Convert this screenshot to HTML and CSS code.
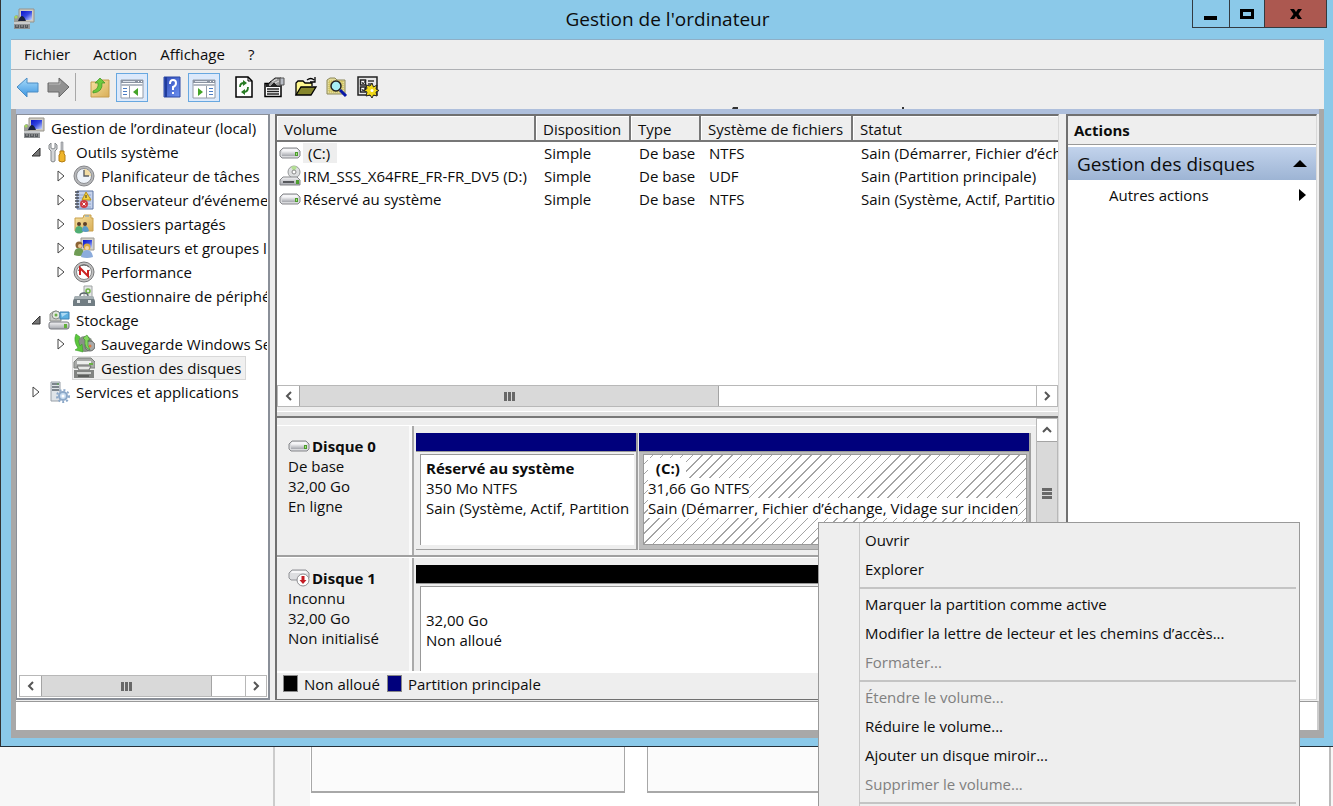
FILE: index.html
```html
<!DOCTYPE html>
<html lang="fr">
<head>
<meta charset="utf-8">
<meta name="viewport" content="width=device-width, initial-scale=1">
<title>Gestion de l'ordinateur</title>
<link rel="stylesheet" href="styles.css">
</head>
<body>
<svg class="sprite" aria-hidden="true">
  <defs>
    <linearGradient id="screen" x1="0" y1="0" x2="1" y2="1"><stop offset="0" stop-color="#0a14c8"/><stop offset=".5" stop-color="#3446e0"/><stop offset="1" stop-color="#c8d8ff"/></linearGradient>
    <linearGradient id="metal" x1="0" y1="0" x2="0" y2="1"><stop offset="0" stop-color="#f4f4f6"/><stop offset="1" stop-color="#a4a6ac"/></linearGradient>
    <linearGradient id="folder" x1="0" y1="0" x2="1" y2="1"><stop offset="0" stop-color="#f7e4a4"/><stop offset="1" stop-color="#d9ae58"/></linearGradient>
    <linearGradient id="blueArrow" x1="0" y1="0" x2="0" y2="1"><stop offset="0" stop-color="#a8dcfa"/><stop offset="1" stop-color="#3c94e0"/></linearGradient>
    <linearGradient id="book" x1="0" y1="0" x2="1" y2="1"><stop offset="0" stop-color="#2c48b8"/><stop offset="1" stop-color="#6e92f0"/></linearGradient>
  </defs>
  <symbol id="i-computer" viewBox="0 0 22 22">
    <path d="M6 1h15v13H6z" fill="#d0cdc4" stroke="#96938a"/><path d="M8 3h11v9H8z" fill="url(#screen)"/>
    <path d="M1 9q3-4 5 0v5H1z" fill="#9a9c96"/><circle cx="3" cy="9" r="1.500" fill="#a4d85c"/>
    <path d="M5 13q2-5 4-5t4 5z" fill="#18203c"/><path d="M1 14h16v7H1z" fill="#8f9294"/><path d="M1 14h16v2H1z" fill="#c9cbcc"/>
    <path d="M2 17h4v3H2zm5 0h4v3H7zm5 0h3v3h-3z" fill="#55595d"/><path d="M3 18h2m3 0h2m3 0h1" stroke="#aaa"/>
  </symbol>
  <symbol id="i-tools" viewBox="0 0 22 22">
    <path d="M3 2v5l2 1 2-1V2l2 2v4l-2 2v10q-2 2-4 0V10L1 8V4z" fill="#d4d6d8" stroke="#85898c"/>
    <path d="M13 1h2v9h-2z" fill="#bcbec2" stroke="#85888c" stroke-width=".6"/><path d="M12 10h4v3l1 1v6q-3 2-6 0v-6l1-1z" fill="#efb52a" stroke="#b47c10"/>
  </symbol>
  <symbol id="i-clock" viewBox="0 0 22 22">
    <circle cx="11" cy="11" r="10" fill="#b7b8ba" stroke="#85868a"/><circle cx="11" cy="11" r="7.500" fill="#eef3fa" stroke="#8c8e92"/>
    <path d="M11 11V4a7 7 0 0 1 7 7z" fill="#f2dca4"/><path d="M11 5v6h5" fill="none" stroke="#5c6066" stroke-width="1.400"/>
  </symbol>
  <symbol id="i-log" viewBox="0 0 22 22">
    <path d="M4 2h16v18H4z" fill="#c7d4ec" stroke="#5c74a4"/><path d="M6 6h12M6 9h12M6 12h12M6 15h12M6 18h12" stroke="#8fa4cc"/>
    <path d="M2 3h4M2 6h4M2 9h4M2 12h4M2 15h4M2 18h4" stroke="#484c54" stroke-width="1.400"/>
    <path d="M13 3l5 8H9z" fill="#f4d23c" stroke="#b89018"/><path d="M13 6v3" stroke="#333"/><circle cx="11" cy="15" r="4" fill="#cf3c44"/><path d="M9.500 13.500l3 3m0-3l-3 3" stroke="#fff"/>
  </symbol>
  <symbol id="i-shared" viewBox="0 0 22 22">
    <path d="M2 5h8l1-3h7v3h2v13H2z" fill="url(#folder)" stroke="#c9a04c"/><path d="M12 3h4" stroke="#74a4d8"/>
    <circle cx="6" cy="11" r="2" fill="#5c4028"/><circle cx="12" cy="11" r="2" fill="#5c4028"/><path d="M2 19q0-6 4-6t4 6q-4 3-8 0z" fill="#4fae74"/><path d="M9 18q0-5 3-5t4 5q-3 2-7 0z" fill="#5a9cc8"/>
  </symbol>
  <symbol id="i-users" viewBox="0 0 22 22">
    <path d="M8 1h13v12H8z" fill="#d3d1ca" stroke="#9c9a92"/><path d="M10 3h9v8h-9z" fill="url(#screen)"/>
    <circle cx="6" cy="8" r="3.500" fill="#8c6434"/><circle cx="7" cy="9" r="2" fill="#efc898"/><path d="M1 18q0-7 5-7t5 7q-5 2-10 0z" fill="#6f9c54"/>
    <circle cx="14" cy="10" r="3.500" fill="#d9ac44"/><circle cx="14" cy="11" r="2" fill="#f4d4a8"/><path d="M8 20q1-7 6-7t6 7q-6 2-12 0z" fill="#8cacdc"/>
  </symbol>
  <symbol id="i-gauge" viewBox="0 0 22 22">
    <circle cx="11" cy="11" r="10" fill="#c2c2c2" stroke="#77787a"/><circle cx="11" cy="11" r="7.500" fill="#fff" stroke="#88898a"/>
    <path d="M6 6q5-4 10 0M5 9l2 1m10-1l-2 1" fill="none" stroke="#5a5a5a"/><path d="M7 14V7l8 8V9" fill="none" stroke="#cc2222" stroke-width="2"/>
  </symbol>
  <symbol id="i-device" viewBox="0 0 22 22">
    <path d="M11 1h8v13h-8z" fill="#e4e6e6" stroke="#a0a4a4"/><circle cx="15" cy="6" r="2" fill="none" stroke="#6cb444" stroke-width="1.500"/>
    <path d="M7 11q0-3 4-3t4 3" fill="none" stroke="#5c666c" stroke-width="1.400"/><path d="M2 11h18l2 5v5H0v-5z" fill="#717d83"/><path d="M2 11h18l1 3H1z" fill="#a6b0b4"/><path d="M4 15h3v3H4zm11 0h3v3h-3z" fill="#e2e6e8"/>
  </symbol>
  <symbol id="i-storage" viewBox="0 0 22 22">
    <path d="M2 5q6-6 11 0v7H2z" fill="#c9cac8" stroke="#92958f"/><circle cx="8" cy="6" r="4" fill="#e2e6de" stroke="#8a8d88"/><circle cx="8" cy="6" r="1.500" fill="#6cb048"/>
    <path d="M12 3h9v7h-9z" fill="#5cb0e0" stroke="#3c82b4"/><path d="M13 4h7l-6 4z" fill="#acdaf4"/><rect x="1" y="13" width="20" height="7" rx="2" fill="url(#metal)" stroke="#787a80"/><path d="M16 15h3v4h-3z" fill="#62b03c"/>
  </symbol>
  <symbol id="i-backup" viewBox="0 0 22 22">
    <circle cx="12" cy="11" r="8" fill="#8a9088"/><circle cx="17" cy="13" r="5" fill="#a8aaaa" stroke="#646866"/><circle cx="17" cy="13" r="1.500" fill="#e07840"/>
    <path d="M3 1q-3 7 2 14l-3 2 8 2-1-8-2 2q-3-5 0-9z" fill="#5cc83c" stroke="#3c9c2c" stroke-width=".6"/><path d="M10 5l4-3 3 5-2 0q-1 6 2 10-6-2-5-10z" fill="#82d85c" stroke="#3c8c2c" stroke-width=".6"/>
  </symbol>
  <symbol id="i-disks" viewBox="0 0 22 22">
    <path d="M5 1h13l4 4v6H1V5z" fill="#a8aaa8" stroke="#7c807c"/><path d="M4 4h14v3H4z" fill="#eceeec"/><path d="M16 6h4v2h-4z" fill="#68b044"/>
    <path d="M4 9h14l-2 4H6z" fill="#e6e8e6" stroke="#6a6c6a"/><path d="M1 13h20v8H1z" fill="#828482"/><path d="M4 15h14v2H4z" fill="#d2d4d2"/><path d="M5 18h11v2H5z" fill="#5c5e5c"/>
  </symbol>
  <symbol id="i-services" viewBox="0 0 22 22">
    <path d="M3 1h9v19H3z" fill="#dfe4e8" stroke="#98a0a8"/><path d="M4 3h7M4 6h7M4 9h7" stroke="#5c666e" stroke-width="1.400"/><path d="M9 3h2" stroke="#58b048"/>
    <circle cx="15" cy="15" r="4" fill="#c8dcf0" stroke="#8ca8c8" stroke-width="2"/><circle cx="15" cy="15" r="6" fill="none" stroke="#8ca8c8" stroke-width="2" stroke-dasharray="2 2"/><circle cx="15" cy="15" r="1.500" fill="#fff"/>
  </symbol>
  <symbol id="i-drive" viewBox="0 0 22 12">
    <path d="M4 1h14l3 3v5l-2 2H3L1 9V4z" fill="#d9dadd" stroke="#85868a"/><path d="M3 4h16v5H3z" fill="url(#metal)"/><path d="M4 2h14l1 2H3z" fill="#f5f5f7"/><path d="M16 5h3v4h-3z" fill="#4c9c2c"/><path d="M17 6h1v2h-1z" fill="#a4e084"/>
  </symbol>
  <symbol id="i-optical" viewBox="0 0 22 22">
    <circle cx="15" cy="7" r="6" fill="#dddfe0" stroke="#96989a"/><path d="M15 7l-3-5q3-2 6 0z" fill="#b4e094"/><circle cx="15" cy="7" r="2" fill="#fff" stroke="#888"/>
    <path d="M4 12h14l3 3v5H1v-5z" fill="url(#metal)" stroke="#85878a"/><path d="M4 17h11" stroke="#56585c" stroke-width="2"/><path d="M17 15h3v4h-3z" fill="#4ea030"/>
  </symbol>
  <symbol id="i-drive-error" viewBox="0 0 22 18">
    <path d="M4 1h14l3 3v5l-2 2H3L1 9V4z" fill="#dddee1" stroke="#909196"/><path d="M4 2h14l1 2H3z" fill="#f7f7f9"/><circle cx="15" cy="11" r="6" fill="#fff" stroke="#8c8c90"/><path d="M15 7v5" stroke="#c41c24" stroke-width="3"/><path d="M11.500 11h7L15 15z" fill="#c41c24"/>
  </symbol>
  <symbol id="i-open" viewBox="0 0 10 10"><path d="M9 1v8H1z" fill="#777" stroke="#333"/></symbol>
  <symbol id="i-closed" viewBox="0 0 8 12"><path d="M1 1v10l6-5z" fill="#fff" stroke="#444"/></symbol>
  <symbol id="i-left" viewBox="0 0 8 12"><path d="M6 2L2 6l4 4" fill="none" stroke="#555" stroke-width="2"/></symbol>
  <symbol id="i-right" viewBox="0 0 8 12"><path d="M2 2l4 4-4 4" fill="none" stroke="#555" stroke-width="2"/></symbol>
  <symbol id="i-up" viewBox="0 0 12 8"><path d="M2 6l4-4 4 4" fill="none" stroke="#555" stroke-width="2"/></symbol>
  <symbol id="i-down" viewBox="0 0 12 8"><path d="M2 2l4 4 4-4" fill="none" stroke="#555" stroke-width="2"/></symbol>
</svg>

<main class="window">
  <header class="titlebar">
    <svg class="app-icon"><use href="#i-computer"/></svg>
    <h1 class="title">Gestion de l'ordinateur</h1>
    <div class="caption-buttons">
      <button class="caption minimize" aria-label="Réduire"><svg width="14" height="14"><path d="M0 9h13v4H0z"/></svg></button>
      <button class="caption maximize" aria-label="Agrandir"><svg width="14" height="14"><path d="M1.500 3.500h11v7h-11z" fill="none" stroke="#000" stroke-width="3"/></svg></button>
      <button class="caption close" aria-label="Fermer"><svg width="14" height="14"><path d="M1 2h4l2 3 2-3h4L9.500 7l3.500 5H9L7 9l-2 3H1l3.500-5z"/></svg></button>
    </div>
  </header>

  <nav class="menubar">
    <button>Fichier</button><button>Action</button><button>Affichage</button><button>?</button>
  </nav>

  <div class="toolbar">
    <div class="tools history">
      <button aria-label="Précédent"><svg width="24" height="24"><path d="M1 12L11 3v5h11v9H11v5z" fill="url(#blueArrow)" stroke="#4a8cc4"/></svg></button>
      <button aria-label="Suivant"><svg width="24" height="24"><path d="M23 12L13 3v5H2v9h11v5z" fill="#929292" stroke="#686868"/><path d="M3 9h11V6" stroke="#bbb" fill="none"/></svg></button>
    </div>
    <div class="tools nav-tools">
      <button aria-label="Dossier parent"><svg width="24" height="24"><path d="M3 7h9l2-2h7v17H3z" fill="url(#folder)" stroke="#c49c4c"/><path d="M5 16q6-2 5-8H7l5-5 5 5h-3q1 9-9 10z" fill="#6cc83c" stroke="#3c9424" stroke-width=".7"/></svg></button>
      <button class="pressed" aria-label="Arborescence"><svg width="24" height="24"><path d="M1 5h22v18H1z" fill="#fff" stroke="#949ca8"/><path d="M1 5h22v3H1z" fill="#8c94a2"/><path d="M3 6.500h12" stroke="#dde2ea"/><path d="M18 6.500h1m2 0h1" stroke="#fff"/><path d="M1 9h22v2H1z" fill="#b4bac4"/><path d="M9.500 11v12" stroke="#949ca8"/><path d="M3 13.500h4M3 16.500h4M3 19.500h4" stroke="#4c7cc4"/><path d="M18 13v8l-5-4z" fill="#44a428"/></svg></button>
    </div>
    <div class="tools nav-tools">
      <button aria-label="Aide"><svg width="24" height="24"><path d="M4 2h16v20H4z" fill="url(#book)" stroke="#2c48a4"/><path d="M6 2v20" stroke="#203c9c" stroke-width="2"/><path d="M10 9q0-4 3-4t3 3-3 4v3" fill="none" stroke="#fff" stroke-width="2"/><path d="M12 17h2v2h-2z" fill="#fff"/></svg></button>
      <button class="pressed" aria-label="Volet Actions"><svg width="24" height="24"><path d="M1 5h22v18H1z" fill="#fff" stroke="#949ca8"/><path d="M1 5h22v3H1z" fill="#8c94a2"/><path d="M3 6.500h12" stroke="#dde2ea"/><path d="M18 6.500h1m2 0h1" stroke="#fff"/><path d="M1 9h22v2H1z" fill="#b4bac4"/><path d="M14.500 11v12" stroke="#949ca8"/><path d="M17 13.500h4M17 16.500h4M17 19.500h4" stroke="#4c7cc4"/><path d="M6 13v8l5-4z" fill="#44a428"/></svg></button>
    </div>
    <div class="tools disk-tools">
      <button aria-label="Actualiser"><svg width="24" height="24"><path d="M4 2h12l4 4v16H4z" fill="#fff" stroke="#000" stroke-width="1.500"/><path d="M16 2v4h4" fill="none" stroke="#000"/><path d="M8 12q0-4 4-4M16 12q0 5-4 5" fill="none" stroke="#287c24" stroke-width="1.800"/><path d="M11 5v6l4-3zM13 14v6l-4-3z" fill="#287c24"/></svg></button>
      <button aria-label="Propriétés"><svg width="24" height="24"><path d="M2 8.500h16v13H2z" fill="#fff" stroke="#000" stroke-width="1.500"/><path d="M3 9h14v3H3z" fill="#222"/><path d="M4 14h12M4 16.500h12M4 19h12" stroke="#222" stroke-width="1.400"/><path d="M6 8l6-5h6v8h-4l-3-3-4 4-2-2 3-4z" fill="#999" stroke="#222"/><path d="M17 3h4v7h-4z" fill="#b8bcc4" stroke="#555"/><path d="M9 7l5-3m-2 4l4-2" stroke="#ddd"/></svg></button>
      <button aria-label="Ouvrir"><svg width="24" height="24"><path d="M2 20V8l2-2h5l2 2h7v3" fill="#fff890" stroke="#000" stroke-width="1.300"/><path d="M2 20l5-8h15l-5 8z" fill="#86862c" stroke="#000" stroke-width="1.300"/><path d="M13 5q4-3 7 0m1-3v5h-5" fill="none" stroke="#000" stroke-width="1.300"/></svg></button>
      <button aria-label="Explorer"><svg width="24" height="24"><path d="M2 5l3-2h5l2 2h8v14H2z" fill="#e4dc9c" stroke="#8c8858"/><path d="M4 6h14v11H4z" fill="#ddd278" stroke="#c4b44c" stroke-dasharray="1 1"/><circle cx="11" cy="11" r="5" fill="#a8f0f4" stroke="#222" stroke-width="1.500"/><path d="M15 15l6 6" stroke="#0818a8" stroke-width="3"/></svg></button>
      <button aria-label="Paramètres"><svg width="24" height="24"><path d="M2 2h19v18H2z" fill="#e8e8e8" stroke="#222" stroke-width="1.500"/><path d="M4.500 5h5v5h-5zm0 7h5v5h-5z" fill="#fff" stroke="#222" stroke-width="1.500"/><path d="M6 7l1 2 3-4M6 14l1 2 3-4" fill="none" stroke="#222"/><path d="M12 6h6M12 9h4" stroke="#333" stroke-width="1.500"/><path d="M16 8l1.500 4 3.500-2-1 4 3 1.500-3 1.500 1 4-3.500-1L16 23l-2-3-4 1 1-4-3-1.500 3-2-1-3.500 4 1z" fill="#f0d818" stroke="#222"/><circle cx="16" cy="15.500" r="1.500" fill="#fff"/></svg></button>
    </div>
    <svg class="clipped-caption" width="176" height="2" aria-hidden="true"><path d="M1 0h5v2H0zM170 0h2v2h-2z" fill="#333"/></svg>
  </div>

  <section class="workspace">
    <div class="panes">
      <aside class="tree-pane">
        <ul class="tree">
          <li class="node root"><svg class="icon"><use href="#i-computer"/></svg><span>Gestion de l’ordinateur (local)</span></li>
          <li class="node"><button class="toggle" aria-label="Fermer"><svg class="opened"><use href="#i-open"/></svg></button><svg class="icon"><use href="#i-tools"/></svg><span>Outils système</span></li>
          <li class="node child"><button class="toggle" aria-label="Développer"><svg class="closed"><use href="#i-closed"/></svg></button><svg class="icon"><use href="#i-clock"/></svg><span>Planificateur de tâches</span></li>
          <li class="node child"><button class="toggle" aria-label="Développer"><svg class="closed"><use href="#i-closed"/></svg></button><svg class="icon"><use href="#i-log"/></svg><span>Observateur d’événeme</span></li>
          <li class="node child"><button class="toggle" aria-label="Développer"><svg class="closed"><use href="#i-closed"/></svg></button><svg class="icon"><use href="#i-shared"/></svg><span>Dossiers partagés</span></li>
          <li class="node child"><button class="toggle" aria-label="Développer"><svg class="closed"><use href="#i-closed"/></svg></button><svg class="icon"><use href="#i-users"/></svg><span>Utilisateurs et groupes l</span></li>
          <li class="node child"><button class="toggle" aria-label="Développer"><svg class="closed"><use href="#i-closed"/></svg></button><svg class="icon"><use href="#i-gauge"/></svg><span>Performance</span></li>
          <li class="node child leaf"><svg class="icon"><use href="#i-device"/></svg><span>Gestionnaire de périphé</span></li>
          <li class="node"><button class="toggle" aria-label="Fermer"><svg class="opened"><use href="#i-open"/></svg></button><svg class="icon"><use href="#i-storage"/></svg><span>Stockage</span></li>
          <li class="node child"><button class="toggle" aria-label="Développer"><svg class="closed"><use href="#i-closed"/></svg></button><svg class="icon"><use href="#i-backup"/></svg><span>Sauvegarde Windows Se</span></li>
          <li class="node child leaf"><div class="selected"><svg class="icon"><use href="#i-disks"/></svg><span>Gestion des disques</span></div></li>
          <li class="node"><button class="toggle" aria-label="Développer"><svg class="closed"><use href="#i-closed"/></svg></button><svg class="icon"><use href="#i-services"/></svg><span>Services et applications</span></li>
        </ul>
        <div class="scroll-h">
          <button aria-label="Gauche"><svg class="closed"><use href="#i-left"/></svg></button>
          <div class="track"><div class="thumb tree-thumb"><i></i><i></i><i></i></div></div>
          <button aria-label="Droite"><svg class="closed"><use href="#i-right"/></svg></button>
        </div>
      </aside>

      <section class="center-pane">
        <div class="volumes">
          <table class="volume-table">
            <colgroup><col class="c-volume"><col class="c-layout"><col class="c-type"><col class="c-fs"><col></colgroup>
            <thead><tr><th>Volume</th><th>Disposition</th><th>Type</th><th>Système de fichiers</th><th>Statut</th></tr></thead>
            <tbody>
              <tr><td><div class="volume"><svg class="drive"><use href="#i-drive"/></svg><span class="picked">(C:)</span></div></td><td>Simple</td><td>De base</td><td>NTFS</td><td>Sain (Démarrer, Fichier d’éch</td></tr>
              <tr><td><div class="volume"><svg class="icon"><use href="#i-optical"/></svg><span>IRM_SSS_X64FRE_FR-FR_DV5 (D:)</span></div></td><td>Simple</td><td>De base</td><td>UDF</td><td>Sain (Partition principale)</td></tr>
              <tr><td><div class="volume"><svg class="drive"><use href="#i-drive"/></svg><span>Réservé au système</span></div></td><td>Simple</td><td>De base</td><td>NTFS</td><td>Sain (Système, Actif, Partitio</td></tr>
            </tbody>
          </table>
        </div>
        <div class="scroll-h">
          <button aria-label="Gauche"><svg class="closed"><use href="#i-left"/></svg></button>
          <div class="track"><div class="thumb list-thumb"><i></i><i></i><i></i></div></div>
          <button aria-label="Droite"><svg class="closed"><use href="#i-right"/></svg></button>
        </div>
        <div class="split-h"></div>
        <div class="graph">
          <div class="disks">
            <div class="disk">
              <div class="disk-label"><strong><svg class="drive"><use href="#i-drive"/></svg>Disque 0</strong><span>De base</span><span>32,00 Go</span><span>En ligne</span></div>
              <div class="partitions">
                <div class="partition reserved"><div class="band"></div><div class="part-body"><strong>Réservé au système</strong><span>350 Mo NTFS</span><span>Sain (Système, Actif, Partition</span></div></div>
                <div class="partition current"><div class="band"></div><div class="part-body"><strong>&nbsp; (C:)</strong><span>31,66 Go NTFS</span><span>Sain (Démarrer, Fichier d’échange, Vidage sur inciden</span></div></div>
              </div>
            </div>
            <div class="disk">
              <div class="disk-label"><strong><svg class="drive-error"><use href="#i-drive-error"/></svg>Disque 1</strong><span>Inconnu</span><span>32,00 Go</span><span>Non initialisé</span></div>
              <div class="partitions">
                <div class="partition unallocated"><div class="band"></div><div class="part-body"><strong>&nbsp;</strong><span>32,00 Go</span><span>Non alloué</span></div></div>
              </div>
            </div>
          </div>
          <div class="scroll-v">
            <button aria-label="Haut"><svg class="updown"><use href="#i-up"/></svg></button>
            <div class="v-track"><div class="v-thumb"><i></i><i></i><i></i></div></div>
            <button aria-label="Bas"><svg class="updown"><use href="#i-down"/></svg></button>
          </div>
        </div>
        <div class="legend"><span><i class="swatch black"></i>Non alloué</span><span><i class="swatch navy"></i>Partition principale</span></div>
      </section>

      <aside class="actions-pane">
        <h2>Actions</h2>
        <button class="group">Gestion des disques<svg width="14" height="8"><path d="M0 7L7 0l7 7z"/></svg></button>
        <button class="action">Autres actions<svg width="8" height="12"><path d="M1 0l7 6-7 6z"/></svg></button>
      </aside>
    </div>
    <div class="statusbar"></div>
  </section>
</main>

<div class="backdrop">
  <div class="back-left"></div>
  <div class="back-sheet"><div class="back-box"></div><div class="back-box"></div></div>
  <div class="back-right"></div>
</div>

<div class="context-menu" role="menu">
  <button role="menuitem">Ouvrir</button>
  <button role="menuitem">Explorer</button>
  <hr>
  <button role="menuitem">Marquer la partition comme active</button>
  <button role="menuitem">Modifier la lettre de lecteur et les chemins d’accès...</button>
  <button role="menuitem" disabled>Formater...</button>
  <hr>
  <button role="menuitem" disabled>Étendre le volume...</button>
  <button role="menuitem">Réduire le volume...</button>
  <button role="menuitem">Ajouter un disque miroir...</button>
  <button role="menuitem" disabled>Supprimer le volume...</button>
  <hr>
</div>
</body>
</html>
```

FILE: styles.css
```css
* { box-sizing: border-box; }

body {
  margin: 0;
  height: 100vh;
  display: grid;
  grid-template-rows: minmax(0, 1fr) 59px;
  overflow: hidden;
  position: relative;
  background: #fff;
  color: #0c0c0c;
  font: 15px/20px "Open Sans", "Noto Sans", sans-serif;
}

button {
  margin: 0;
  padding: 0;
  border: 0;
  background: none;
  color: inherit;
  font: inherit;
}

svg { display: block; flex: none; }
ul { list-style: none; margin: 0; padding: 0; }
.sprite { position: absolute; width: 0; height: 0; }

/* Window frame */
.window {
  display: flex;
  flex-direction: column;
  min-height: 0;
  padding: 0 9px 8px 10px;
  background: #8bc9e9;
  border-left: 1px solid #333;
  border-bottom: 1px solid #24303a;
}

.titlebar {
  display: grid;
  grid-template-columns: 135px 1fr 135px;
  height: 40px;
  border-bottom: 1px solid #8fafc6;
}
.app-icon { width: 22px; height: 22px; margin: 8px 0 0 2px; }
.title { margin: 0; font-size: 19px; font-weight: 400; line-height: 39px; text-align: center; }
.caption-buttons {
  display: flex;
  justify-self: end;
  align-self: start;
  height: 28px;
  margin-right: -3px;
  border: 1px solid #333a40;
  border-top: 0;
}
.caption { display: grid; place-items: center; width: 37px; border-right: 1px solid #333a40; }
.caption.maximize { width: 35px; }
.caption.close { width: 61px; border-right: 0; background: #ac5850; }

.menubar {
  display: flex;
  gap: 23px;
  height: 30px;
  padding: 0 13px 2px;
  background: #eee;
  border-bottom: 1px solid #aeb0b4;
}

.toolbar {
  display: flex;
  align-items: center;
  gap: 12px;
  height: 39px;
  padding: 0 5px;
  background: #eee;
}
.tools { display: flex; align-items: center; margin-bottom: 5px; }
.history { gap: 6px; height: 28px; padding-right: 5px; border-right: 1px solid #a8a8a8; }
.nav-tools { gap: 4px; }
.disk-tools { gap: 7px; }
.pressed { height: 29px; padding: 1px 3px; background: #dce9fb; border: 1px solid #68a8e0; }
.clipped-caption { align-self: flex-end; margin-left: 340px; }

/* Workspace */
.workspace {
  flex: 1;
  min-height: 0;
  display: flex;
  flex-direction: column;
  border: solid #a8a8a8;
  border-width: 0 5px 8px;
  background: #eee;
}
.panes {
  flex: 1;
  min-height: 0;
  display: grid;
  grid-template-columns: 254px minmax(0, 1fr) 251px;
  column-gap: 5px;
  padding: 0 2px 1px 0;
  border-top: 5px solid #aebfdc;
}
.statusbar { height: 29px; background: #fff; border-top: 1px solid #999; border-right: 2px solid #ccc; }

.tree-pane {
  display: flex;
  flex-direction: column;
  justify-content: space-between;
  min-width: 0;
  min-height: 0;
  padding: 1px 1px 1px 2px;
  background: #fff;
  border: solid #8a8f98;
  border-width: 1px 2px 2px 1px;
}
.tree { overflow: hidden; }
.node { display: flex; align-items: center; height: 24px; padding-left: 4px; white-space: nowrap; }
.node span { padding-left: 6px; }
.node.child { padding-left: 29px; }
.node.leaf { padding-left: 54px; }
.icon { flex: none; width: 22px; height: 22px; }
.toggle { flex: none; display: grid; place-items: center; width: 25px; height: 24px; }
.opened { width: 10px; height: 10px; }
.closed { width: 8px; height: 12px; }
.selected { display: flex; align-items: center; height: 22px; padding-right: 4px; background: #f0f0f0; outline: 1px solid #d8d8d8; }

/* Scroll bars */
.scroll-h { display: flex; flex: none; height: 22px; background: #fff; border: 1px solid #b8b8b8; }
.scroll-h button { display: grid; place-items: center; width: 21px; }
.scroll-h button:last-child { border-left: 1px solid #b8b8b8; }
.track { flex: 1; }
.thumb {
  display: flex;
  align-items: center;
  justify-content: center;
  gap: 1px;
  height: 20px;
  background: #d9d9d9;
  border: solid #a4a4a4;
  border-width: 0 1px;
}
.thumb i { width: 3px; height: 9px; background: #686868; }
.tree-thumb { width: 84%; }
.list-thumb { width: 57%; }
.scroll-v { display: flex; flex-direction: column; width: 22px; background: #fff; border: 1px solid #b8b8b8; }
.scroll-v button { display: grid; place-items: center; height: 22px; }
.updown { width: 12px; height: 8px; }
.v-track { flex: 1; }
.v-thumb {
  display: flex;
  flex-direction: column;
  align-items: center;
  justify-content: center;
  gap: 1px;
  height: 105px;
  background: #d9d9d9;
  border: solid #a4a4a4;
  border-width: 1px 0;
}
.v-thumb i { width: 10px; height: 3px; background: #686868; }

/* Centre pane */
.center-pane {
  display: flex;
  flex-direction: column;
  min-width: 0;
  min-height: 0;
  margin-right: 2px;
  border: solid #707070;
  border-width: 2px 1px 1px 2px;
  border-right-color: #d8d8d8;
}
.volumes { flex: none; height: 269px; overflow: hidden; background: #fff; }
.volume-table { width: 100%; table-layout: fixed; border-collapse: separate; border-spacing: 0; white-space: nowrap; }
.c-volume { width: 259px; }
.c-layout { width: 95px; }
.c-type { width: 70px; }
.c-fs { width: 152px; }
.volume-table th {
  height: 26px;
  padding: 2px 0 0 7px;
  font-weight: 400;
  text-align: left;
  background: #eee;
  border: solid #777;
  border-width: 0 2px 2px 0;
  box-shadow: inset 1px 1px #fff;
}
.volume-table th:last-child { border-right: 0; }
.volume-table td { height: 23px; padding: 0 0 2px 8px; overflow: hidden; }
.volume-table td:first-child { padding-left: 2px; }
.volume { display: flex; align-items: center; gap: 2px; height: 21px; }
.drive { width: 22px; height: 12px; }
.drive-error { width: 22px; height: 18px; }
.picked { padding: 0 7px 0 5px; background: #eee; }

.split-h { flex: none; height: 7px; margin-top: 4px; background: #e0e0e0; border-top: 1px solid #fff; border-bottom: 2px solid #777; }
.graph { flex: 1; min-height: 0; display: flex; overflow: hidden; background: #eee; }
.disks { flex: 1; min-width: 0; overflow: hidden; padding-top: 7px; }
.disk { display: grid; grid-template-columns: 137px minmax(0, 1fr); height: 132px; border-top: 1px solid #fff; border-bottom: 2px solid #a0a0a0; }
.disk-label, .part-body { display: flex; flex-direction: column; }
.disk-label { padding: 10px 0 0 11px; border-right: 2px solid #aaa; box-shadow: inset -3px 0 #fafafa; }
.disk-label strong { display: flex; align-items: center; gap: 2px; }
.partitions { display: flex; gap: 1px; padding: 7px 5px 5px 2px; }
.partition { display: flex; flex-direction: column; min-width: 0; border-right: 2px solid #a0a0a0; border-bottom: 1px solid #a0a0a0; }
.reserved { flex: 0 0 222px; }
.current { flex: 1; background: #bcbcbc; }
.unallocated { flex: 1; }
.band { height: 19px; background: #00007c; border-bottom: 1px solid #999; }
.unallocated .band { background: #000; }
.part-body {
  flex: 1;
  margin: 2px 2px 4px 4px;
  padding: 3px 4px 0 5px;
  overflow: hidden;
  white-space: nowrap;
  background: #fff;
  border: solid #999;
  border-width: 1px 0 0 1px;
}
.current .part-body {
  align-items: flex-start;
  padding: 3px 3px 0 4px;
  border-width: 1px;
  background: repeating-linear-gradient(135deg, #fff 0 6px, #a4a4a4 6px 7px);
}
.current .part-body > * { background: #fff; }
.current strong { padding-right: 6px; }

.legend { flex: none; display: flex; align-items: center; gap: 7px; height: 28px; padding: 0 6px 5px; border-top: 2px solid #fff; background: #eee; }
.legend span { display: flex; align-items: center; gap: 6px; }
.swatch { width: 15px; height: 17px; border: 1px solid #888; }
.black { background: #000; }
.navy { background: #00007c; }

/* Actions pane */
.actions-pane { display: flex; flex-direction: column; background: #fff; border: solid #707070; border-width: 2px 1px 1px 2px; border-right-color: #d8d8d8; border-bottom-color: #d8d8d8; }
.actions-pane h2 { margin: 0 0 2px; padding: 2px 6px; font-size: 15px; line-height: 24px; background: #eee; border-bottom: 1px solid #999; }
.group, .action { display: flex; align-items: center; justify-content: space-between; }
.group { height: 33px; padding: 0 9px; font-size: 19px; background: linear-gradient(#c2d3ec, #9db4d4); }
.action { height: 30px; padding: 0 10px 0 41px; }

/* Content behind the window */
.backdrop { display: grid; grid-template-columns: 310px 1fr 4px; background: #f7f7f7; }
.back-left { width: 275px; border-right: 2px solid #ccc; }
.back-sheet { display: flex; gap: 22px; padding: 0 35px 13px 1px; background: #fff; }
.back-box { flex: 0 0 314px; background: #fbfbfb; border: 1px solid #a8a8a8; border-width: 0 1px 2px; }
.back-right { border-left: 2px solid #bbb; }

/* Context menu */
.context-menu {
  position: absolute;
  left: 818px;
  top: 522px;
  width: 482px;
  padding: 4px 3px 0 40px;
  background: linear-gradient(90deg, #eee 40px, #c8c8c8 40px 41px, #eee 41px);
  border: 1px solid #999;
}
.context-menu button { display: block; width: 100%; height: 29px; padding: 0 0 3px 6px; text-align: left; }
.context-menu button:disabled { color: #808080; }
.context-menu hr { height: 2px; margin: 2px 0; border: 0; background: #c4c4c4; }
```
